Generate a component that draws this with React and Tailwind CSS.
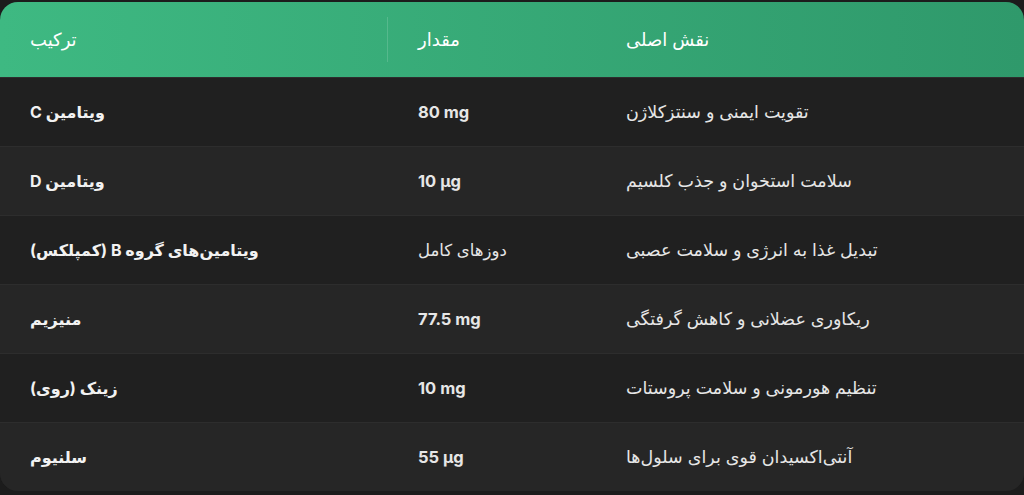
import React from 'react';

const rows = [
    { name: 'ویتامین C', amount: '80 mg', amountBold: true, role: 'تقویت ایمنی و سنتزکلاژن' },
    { name: 'ویتامین D', amount: '10 μg', amountBold: true, role: 'سلامت استخوان و جذب کلسیم' },
    { name: 'ویتامین‌های گروه B (کمپلکس)', amount: 'دوزهای کامل', amountBold: false, role: 'تبدیل غذا به انرژی و سلامت عصبی' },
    { name: 'منیزیم', amount: '77.5 mg', amountBold: true, role: 'ریکاوری عضلانی و کاهش گرفتگی' },
    { name: 'زینک (روی)', amount: '10 mg', amountBold: true, role: 'تنظیم هورمونی و سلامت پروستات' },
    { name: 'سلنیوم', amount: '55 μg', amountBold: true, role: 'آنتی‌اکسیدان قوی برای سلول‌ها' },
];

const App = () => {
    return (
        <div
            className="w-[1024px] h-[495px] bg-[#1c1c1c] pt-[2px] overflow-hidden"
            style={{ fontFamily: 'Inter, "DejaVu Sans", sans-serif' }}
        >
            <div className="rounded-[18px] overflow-hidden bg-[#222222]">
                <div className="flex h-[75px] items-center bg-gradient-to-r from-[#3eb982] to-[#2f996b] text-white text-[18px]">
                    <div className="w-[388px] h-full flex items-center px-[30px] relative">
                        <span dir="auto">ترکیب</span>
                        <div className="absolute right-0 top-[15px] bottom-[15px] w-px bg-white/15" />
                    </div>
                    <div className="w-[208px] h-full flex items-center px-[30px]">
                        <span dir="auto">مقدار</span>
                    </div>
                    <div className="flex-1 h-full flex items-center px-[30px]">
                        <span dir="auto">نقش اصلی</span>
                    </div>
                </div>

                {rows.map((row, i) => (
                    <div
                        key={i}
                        className={`flex h-[69px] items-center border-t border-[#2d2d2d] ${
                            i % 2 === 0 ? 'bg-[#202020]' : 'bg-[#262626]'
                        }`}
                    >
                        <div className="w-[388px] px-[30px] font-bold text-[16px] text-[#f2f2f2]">
                            <span dir="auto">{row.name}</span>
                        </div>
                        <div
                            className={`w-[208px] px-[30px] text-[16.5px] text-[#e6e6e6] ${
                                row.amountBold ? 'font-bold' : 'font-normal'
                            }`}
                        >
                            <span dir="auto">{row.amount}</span>
                        </div>
                        <div className="flex-1 px-[30px] text-[17.5px] text-[#e6e6e6]">
                            <span dir="auto">{row.role}</span>
                        </div>
                    </div>
                ))}
            </div>
        </div>
    );
};

export default App;
